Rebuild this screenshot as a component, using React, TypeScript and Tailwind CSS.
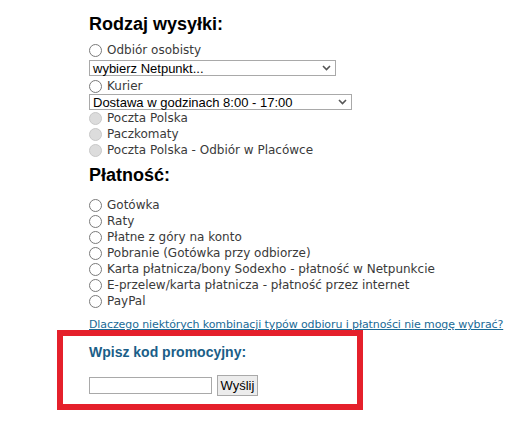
import React from "react";

const Radio = ({ disabled }: { disabled?: boolean }) => (
  <span
    className={
      "inline-block w-[13px] h-[13px] rounded-full border shrink-0 " +
      (disabled ? "border-[#c8c8c8] bg-[#dcdcdc]" : "border-[#7a7a7a] bg-white")
    }
  />
);

const Opt = ({ label, disabled }: { label: string; disabled?: boolean }) => (
  <div className="flex items-center h-[16px] gap-[5px]">
    <Radio disabled={disabled} />
    <span className="leading-none">{label}</span>
  </div>
);

const Select = ({ text, w, extra }: { text: string; w: string; extra?: string }) => (
  <div
    className={
      "flex items-center justify-between h-[16px] border border-[#a9a9a9] bg-white pl-[3px] pr-[4px] text-black text-[13px] " +
      w +
      " " +
      (extra || "")
    }
    style={{ fontFamily: '"Liberation Sans", Arial, sans-serif' }}
  >
    <span className="leading-none">{text}</span>
    <svg width="9" height="6" viewBox="0 0 9 6">
      <path d="M1 1 L4.5 4.5 L8 1" stroke="#555" strokeWidth="1.6" fill="none" />
    </svg>
  </div>
);

const headFont = { fontFamily: '"Liberation Sans", Arial, sans-serif' };

export default function App() {
  return (
    <div
      className="w-[529px] h-[442px] bg-white relative overflow-hidden text-[12px] text-[#3a3a3a]"
      style={{ fontFamily: 'Tahoma, "DejaVu Sans", sans-serif' }}
    >
      <div className="pl-[89px] pt-[12px] flex flex-col">
        <h2 className="text-[18px] font-bold text-black leading-[24px] mb-[6px]" style={headFont}>
          Rodzaj wysyłki:
        </h2>
        <Opt label="Odbiór osobisty" />
        <Select text="wybierz Netpunkt..." w="w-[247px]" extra="my-[2px]" />
        <Opt label="Kurier" />
        <Select text="Dostawa w godzinach 8:00 - 17:00" w="w-[263px]" />
        <Opt label="Poczta Polska" disabled />
        <Opt label="Paczkomaty" disabled />
        <Opt label="Poczta Polska - Odbiór w Placówce" disabled />
        <h2 className="text-[18px] font-bold text-black leading-[24px] mt-[5px] mb-[10px]" style={headFont}>
          Płatność:
        </h2>
        <Opt label="Gotówka" />
        <Opt label="Raty" />
        <Opt label="Płatne z góry na konto" />
        <Opt label="Pobranie (Gotówka przy odbiorze)" />
        <Opt label="Karta płatnicza/bony Sodexho - płatność w Netpunkcie" />
        <Opt label="E-przelew/karta płatnicza - płatność przez internet" />
        <Opt label="PayPal" />
        <a
          href="#"
          className="mt-[8px] text-[11px] tracking-[-0.1px] text-[#1a6a96] underline leading-[16px] whitespace-nowrap"
        >
          Dlaczego niektórych kombinacji typów odbioru i płatności nie mogę wybrać?
        </a>
        <div className="mt-[10px] text-[14px] font-bold text-[#1a5e88] leading-[18px]" style={headFont}>
          Wpisz kod promocyjny:
        </div>
        <div className="mt-[14px] flex items-center gap-[5px]">
          <input className="w-[123px] h-[17px] border border-[#a9a9a9] bg-white" />
          <button
            className="h-[21px] w-[41px] border border-[#a9a9a9] bg-[#ececec] text-black text-[13px] leading-none"
            style={{ fontFamily: '"Liberation Sans", Arial, sans-serif' }}
          >
            Wyślij
          </button>
        </div>
      </div>
      <div className="absolute left-[57px] top-[330px] w-[306px] h-[80px] border-[6px] border-[#e5202b]" />
    </div>
  );
}
